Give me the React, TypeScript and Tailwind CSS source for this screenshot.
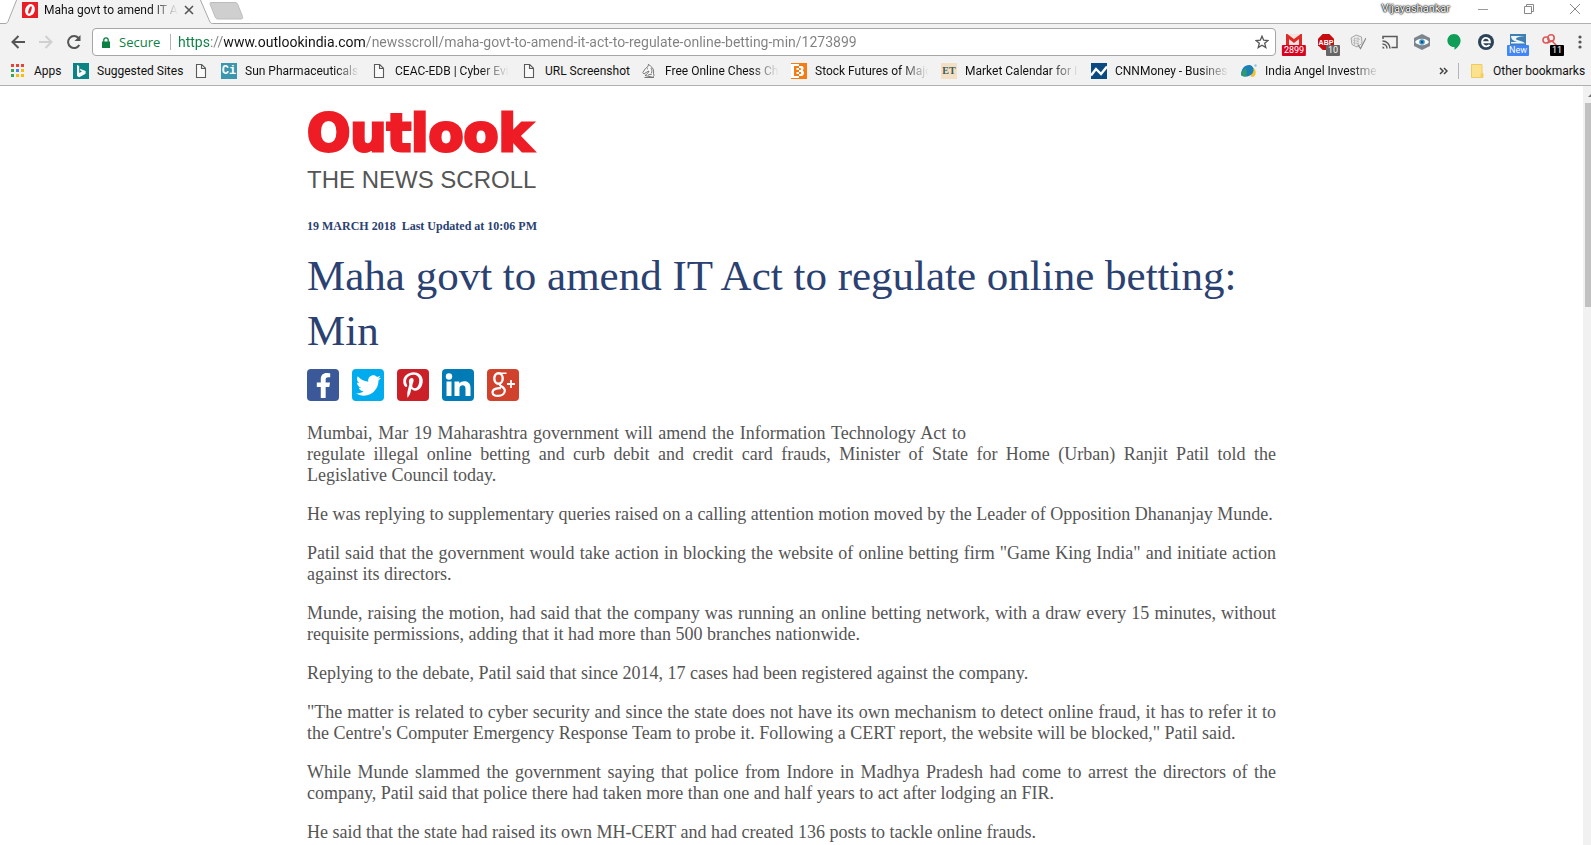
import type { ReactNode } from "react";
import { FaFacebookF, FaTwitter, FaPinterestP } from "react-icons/fa";

const paragraphs = [
  "He was replying to supplementary queries raised on a calling attention motion moved by the Leader of Opposition Dhananjay Munde.",
  'Patil said that the government would take action in blocking the website of online betting firm "Game King India" and initiate action against its directors.',
  "Munde, raising the motion, had said that the company was running an online betting network, with a draw every 15 minutes, without requisite permissions, adding that it had more than 500 branches nationwide.",
  "Replying to the debate, Patil said that since 2014, 17 cases had been registered against the company.",
  '"The matter is related to cyber security and since the state does not have its own mechanism to detect online fraud, it has to refer it to the Centre\'s Computer Emergency Response Team to probe it. Following a CERT report, the website will be blocked," Patil said.',
  "While Munde slammed the government saying that police from Indore in Madhya Pradesh had come to arrest the directors of the company, Patil said that police there had taken more than one and half years to act after lodging an FIR.",
  "He said that the state had raised its own MH-CERT and had created 136 posts to tackle online frauds.",
];

function Icon({ children, size = 16 }: { children: ReactNode; size?: number }) {
  return (
    <svg width={size} height={size} viewBox="0 0 16 16" className="shrink-0" aria-hidden="true">
      {children}
    </svg>
  );
}

const PageIcon = () => (
  <Icon>
    <path d="M3.5 1.5h5.2l3.8 3.8v9.2h-9z M8.5 1.5v4h4" fill="#fafafa" stroke="#5a5a5a" strokeWidth="1.1" />
  </Icon>
);

const AppsIcon = () => (
  <Icon>
    <g fill="#ea4335"><rect x="1" y="1" width="3" height="3" /><rect x="6" y="1" width="3" height="3" /><rect x="11" y="1" width="3" height="3" /></g>
    <rect x="1" y="6" width="3" height="3" fill="#34a853" />
    <rect x="6" y="6" width="3" height="3" fill="#4285f4" />
    <rect x="11" y="6" width="3" height="3" fill="#fbbc05" />
    <rect x="1" y="11" width="3" height="3" fill="#34a853" />
    <rect x="6" y="11" width="3" height="3" fill="#fbbc05" />
    <rect x="11" y="11" width="3" height="3" fill="#fbbc05" />
  </Icon>
);

const BingIcon = () => (
  <Icon>
    <rect width="16" height="16" fill="#0c8484" />
    <path d="M4 2l2.2.9v7.2L9 8.6 7.7 8 6.9 5.8 12.6 8v2.8L6.2 14.2 4 13z" fill="#fff" />
  </Icon>
);

const ChessIcon = () => (
  <Icon>
    <path d="M3.5 14.5h9.5M4 12.5c1.5-1 3.500-2.500 4-4.500L5 9.500 3 11 1.800 9.500 4.500 5.500 7 3.500 7.500 1.200 9.500 3.200c2.500 1.500 3.500 4 3 7l.5 2.500-1.500 1.500zM6 6l1-.5M10 5c1 1.500 1 3.500.5 5M7 12l4-1" fill="#f7f7f7" stroke="#6a6a6a" strokeWidth="0.9" />
  </Icon>
);

const BloggerIcon = () => (
  <Icon>
    <rect width="16" height="16" fill="#fff" />
    <rect width="16" height="1" fill="#f57c13" />
    <rect y="15" width="16" height="1" fill="#f57c13" />
    <rect x="8" width="8" height="16" fill="#f57c13" />
    <path d="M3 3h5v10H3z" fill="#f57c13" />
    <path d="M5.500 5H8v2H5.500zM5.500 9H8v2H5.500z" fill="#fff" />
    <path d="M8 3h2.500c2 0 3 2.500 1.200 4.600C14 9 13 13 10.500 13H8v-2h2V9H8V7h1.800V5H8z" fill="#fff" />
  </Icon>
);

const CnnIcon = () => (
  <Icon>
    <rect width="16" height="16" fill="#0b4a80" />
    <path d="M0 12.500L5 6l5 5 6-7.500" fill="none" stroke="#fff" strokeWidth="2.400" />
  </Icon>
);

const AngelIcon = () => (
  <Icon>
    <path d="M12 4.500c3 2 3.500 6 1.500 8.500-1 1.200-2.500 1-4 .5z" fill="#f2c230" />
    <path d="M0 12C0 6 3.500 2 8 2c3 0 5 2.500 4.500 5.500C12 11 9 13.500 5 13.500 3 13.500 1 13 0 12z" fill="#1b80b8" />
    <path d="M0 12C1 8 3 6 5 5.500c1 3 .8 6 0 8C3 13.500 1 13 0 12z" fill="#2f9a6c" />
    <circle cx="14.500" cy="2.500" r="1.200" fill="#8bc5e6" />
  </Icon>
);

const FolderIcon = () => (
  <Icon>
    <path d="M2.500 1.500h10.500v9h1v4h-11.500z" fill="#fde28d" stroke="#eecb62" />
    <path d="M11.500 10.500h2.500v4h-2.500z" fill="#f3cf5a" />
  </Icon>
);

const textBadge = "flex size-4 shrink-0 items-center justify-center font-bold";

const bookmarks: { label?: string; icon: ReactNode; width: string }[] = [
  { label: "Apps", icon: <AppsIcon />, width: "w-[27px]" },
  { label: "Suggested Sites", icon: <BingIcon />, width: "w-[84px]" },
  { icon: <PageIcon />, width: "" },
  { label: "Sun Pharmaceuticals", icon: <span className={`${textBadge} bg-[#3b96ae] font-["Liberation_Mono"] text-[12px] text-white`}>Ci</span>, width: "w-[114px] mask-r-from-80%" },
  { label: "CEAC-EDB | Cyber Evi", icon: <PageIcon />, width: "w-[114px] mask-r-from-75%" },
  { label: "URL Screenshot", icon: <PageIcon />, width: "w-[84px]" },
  { label: "Free Online Chess Ch", icon: <ChessIcon />, width: "w-[114px] mask-r-from-75%" },
  { label: "Stock Futures of Majo", icon: <BloggerIcon />, width: "w-[114px] mask-r-from-75%" },
  { label: "Market Calendar for I", icon: <span className={`${textBadge} bg-[#f3dfc3] font-["Liberation_Serif"] text-[10px] text-[#3a5a5a]`}>ET</span>, width: "w-[114px] mask-r-from-75%" },
  { label: "CNNMoney - Busines", icon: <CnnIcon />, width: "w-[114px] mask-r-from-75%" },
  { label: "India Angel Investme", icon: <AngelIcon />, width: "w-[114px] mask-r-from-75%" },
];

const extensions: { name: string; icon: ReactNode; badge?: string; badgeClass?: string }[] = [
  {
    name: "Mail",
    badge: "2899",
    badgeClass: "left-1/2 -translate-x-1/2 bg-[#d5041f]",
    icon: <><rect width="16" height="12" fill="#f3e4e2" /><path d="M1.500 14V2L8 7l6.500-5V14" fill="none" stroke="#dd2c28" strokeWidth="3" /></>,
  },
  {
    name: "Ad blocker",
    badge: "10",
    badgeClass: "right-0.5 w-3.5 bg-[#666]",
    icon: <><path d="M4.700 0h6.600L16 4.700v6.600L11.300 16H4.700L0 11.300V4.700z" fill="#c70d10" /><text x="8" y="10.500" textAnchor="middle" fontFamily="Liberation Sans" fontSize="7" fontWeight="700" fill="#fff">ABP</text></>,
  },
  {
    name: "Checker",
    icon: <><path d="M1 4l5-3 5.500 2 .5 6.500-5 3.500-5-2.500z" fill="#ececec" stroke="#a5a5a5" /><path d="M2.500 6l6 1.500M3 8.500l6 1.500M4 4l6 1.500M4.500 4v7M8 3v9" stroke="#b5b5b5" strokeWidth="0.800" /><path d="M8 11l2.500 3.500L16 4" fill="none" stroke="#8a8a8a" strokeWidth="1.200" /></>,
  },
  {
    name: "Cast",
    icon: <><path d="M1 5V2.500h14v11H9.500" fill="none" stroke="#5a5a5a" strokeWidth="1.500" /><path d="M.5 7a7.500 7.500 0 0 1 7.500 7.500M.5 10a4.500 4.500 0 0 1 4.500 4.500" fill="none" stroke="#5a5a5a" strokeWidth="1.500" /><path d="M.5 12.500a2 2 0 0 1 2 2h-2z" fill="#5a5a5a" /></>,
  },
  {
    name: "Privacy",
    icon: <><path d="M8 0l8 4v8l-8 4-8-4V4z" fill="#7d848b" /><path d="M1 8C4 3.800 12 3.800 15 8 12 12.200 4 12.200 1 8z" fill="#fff" /><circle cx="8" cy="8" r="2.800" fill="#3a96cc" /><circle cx="8" cy="8" r="1.200" fill="#1d4f77" /></>,
  },
  {
    name: "Hangouts",
    icon: <path d="M8 0c3.800 0 6.600 2.900 6.600 6.600 0 4-3 7.200-6.100 9.200v-2.700C4.500 13.300 1.400 10.300 1.400 6.600 1.400 2.900 4.200 0 8 0z" fill="#0f9d58" />,
  },
  {
    name: "Reader",
    icon: <><circle cx="8" cy="8" r="8" fill="#2c4257" /><path d="M4.300 8.300h7.600c.2-5.800-7.800-6-7.800-.2 0 5 5.500 5 7.600 2.800" fill="none" stroke="#fff" strokeWidth="1.900" /></>,
  },
  {
    name: "Capture",
    badge: "New",
    badgeClass: "left-1/2 -translate-x-1/2 bg-[#4285f4]",
    icon: <><rect width="16" height="16" fill="#3f7fb2" /><path d="M1 2h14C9 2.500 6 3.500 6 5c0 1.500 7 1.500 9 4.500H1V8h6C4 7 1 5.500 1 2z" fill="#eef5fa" /></>,
  },
  {
    name: "Links",
    badge: "11",
    badgeClass: "right-0.5 w-3.5 bg-black",
    icon: <g fill="none" stroke="#db5a5a" strokeWidth="1.600"><circle cx="4" cy="6" r="3" /><circle cx="9" cy="4" r="3.200" /><path d="M5 9l5-2 5 5" /></g>,
  },
];

const toolButton = "flex h-8 w-7 shrink-0 items-center justify-center";

function TitleBar() {
  return (
    <header className="flex h-6 shrink-0 items-stretch bg-white">
      <div className="relative w-[250px] shrink-0">
        <svg width="250" height="24" className="absolute inset-0" aria-hidden="true">
          <path d="M0 23.500H5c2 0 2.500-1 3-2L17 0H200l9 21c.6 1.500 1.200 2.500 3 2.500h38V24H0z" fill="#f2f2f2" />
          <path d="M0 23.500H5c2 0 2.500-1 3-2L17-1M200-1l9.500 22c.6 1.500 1.200 2.500 3 2.500H250" fill="none" stroke="#a8a8a8" />
          <path d="M211 2.500h24c1.500 0 2.200.6 2.800 2l4.700 12c.6 1.500 0 2.500-1.500 2.500h-23c-1.500 0-2.200-.6-2.800-2l-5-12.500c-.5-1.300-.2-2 .8-2z" fill="#cfcfcf" stroke="#bdbdbd" />
        </svg>
        <div className="relative flex h-5 items-center pl-[22px]">
          <Icon>
            <rect width="16" height="16" fill="#ea1c24" />
            <ellipse cx="8" cy="8" rx="4.800" ry="6" transform="rotate(18 8 8)" fill="#fff" />
            <ellipse cx="8" cy="8" rx="1.300" ry="4" transform="rotate(18 8 8)" fill="#ea1c24" />
          </Icon>
          <span className="ml-1.5 w-[134px] whitespace-nowrap mask-r-from-80%">Maha govt to amend IT A</span>
          <button aria-label="Close tab" className="ml-1.5">
            <svg width="10" height="10" viewBox="0 0 10 10"><path d="M1 1l8 8M9 1L1 9" stroke="#555" strokeWidth="1.600" /></svg>
          </button>
        </div>
      </div>
      <div className="flex-1 border-b border-[#b0b0b0]" />
      <div className="flex items-start border-b border-[#b0b0b0]">
        <span className="mr-2.5 text-[11px] leading-[18px] text-white [text-shadow:0_0_2px_#000,0_0_2px_#000,0_0_1px_#000]">Vijayashankar</span>
        <button aria-label="Minimize" className="flex h-[17px] w-[46px] items-center justify-center">
          <svg width="10" height="10"><path d="M0 5.500h10" stroke="#999" /></svg>
        </button>
        <button aria-label="Restore" className="flex h-[17px] w-[46px] items-center justify-center">
          <svg width="10" height="10"><path d="M.5 2.500h7v7h-7zM2.500 2.500v-2h7v7h-2" fill="none" stroke="#888" /></svg>
        </button>
        <button aria-label="Close" className="flex h-[17px] w-[39px] items-center justify-center pl-1.5">
          <svg width="10" height="10"><path d="M0 0l10 10M10 0L0 10" stroke="#888" /></svg>
        </button>
      </div>
    </header>
  );
}

function Toolbar() {
  return (
    <nav className="flex h-9 shrink-0 items-center pl-1">
      <button aria-label="Back" className={toolButton}>
        <svg width="14" height="14" viewBox="0 0 14 14"><path d="M14 7H1.500M7.500 1L1.500 7l6 6" fill="none" stroke="#555" strokeWidth="2" /></svg>
      </button>
      <button aria-label="Forward" className={toolButton}>
        <svg width="14" height="14" viewBox="0 0 14 14"><path d="M0 7h12.500M6.500 1l6 6-6 6" fill="none" stroke="#d0d0d0" strokeWidth="2" /></svg>
      </button>
      <button aria-label="Reload" className={toolButton}>
        <svg width="16" height="16" viewBox="0 0 16 16"><path d="M13.300 11A6 6 0 1 1 12.500 4" fill="none" stroke="#555" strokeWidth="2" /><path d="M14.500 1v6h-6z" fill="#555" /></svg>
      </button>
      <div className="ml-1 flex h-7 min-w-0 flex-1 items-center rounded-sm border border-[#a6a6a6] bg-white pr-1.5 pl-[9px]">
        <svg width="8" height="11" viewBox="0 0 8 11" aria-hidden="true"><path d="M0 4.500h8V11H0z" fill="#0b8043" /><path d="M1.800 5V3a2.200 2.200 0 0 1 4.400 0v2" fill="none" stroke="#0b8043" strokeWidth="1.300" /></svg>
        <span className="ml-[9px] w-[42px] font-['Open_Sans',sans-serif] text-[13px] text-[#0b8043]">Secure</span>
        <span className="ml-[9px] h-4 w-px bg-[#b5b5b5]" />
        <input
          aria-label="Address"
          defaultValue="https://www.outlookindia.com/newsscroll/maha-govt-to-amend-it-act-to-regulate-online-betting-min/1273899"
          className="ml-[7px] min-w-0 flex-1 bg-[linear-gradient(90deg,#0b8043_33px,#808080_33px,#808080_46px,#111_46px,#111_188px,#808080_188px)] bg-clip-text text-[14px] text-transparent outline-none"
        />
        <button aria-label="Bookmark this page">
          <svg width="14" height="14" viewBox="0 0 14 14"><path d="M7 1.200l1.700 4 4.300.3-3.300 2.800 1.100 4.200L7 10.200l-3.800 2.300 1.100-4.200L1 5.500l4.300-.3z" fill="none" stroke="#555" strokeWidth="1.300" /></svg>
        </button>
      </div>
      <div className="ml-0.5 flex">
        {extensions.map((e) => (
          <button key={e.name} aria-label={e.name} className="relative flex h-8 w-8 items-center justify-center">
            <Icon>{e.icon}</Icon>
            {e.badge && (
              <span className={`absolute bottom-0.5 h-[11px] rounded-[1px] px-0.5 text-center text-[9px] leading-[11px] text-white ${e.badgeClass}`}>
                {e.badge}
              </span>
            )}
          </button>
        ))}
      </div>
      <button aria-label="Menu" className="flex h-8 w-[25px] items-center pl-3">
        <svg width="4" height="14"><g fill="#555"><circle cx="2" cy="2" r="1.600" /><circle cx="2" cy="7" r="1.600" /><circle cx="2" cy="12" r="1.600" /></g></svg>
      </button>
    </nav>
  );
}

function BookmarksBar() {
  return (
    <nav aria-label="Bookmarks" className="flex h-[26px] shrink-0 items-center border-b border-[#b0b0b0] pb-[3px] pl-2.5">
      <div className="flex min-w-0 flex-1 gap-3 overflow-hidden">
        {bookmarks.map((b, i) => (
          <a key={i} href="#" aria-label={b.label ?? "Untitled"} className="flex shrink-0 items-center gap-2">
            {b.icon}
            {b.label && <span className={`whitespace-nowrap ${b.width}`}>{b.label}</span>}
          </a>
        ))}
      </div>
      <button aria-label="More bookmarks" className="mr-2.5">
        <svg width="9" height="8" viewBox="0 0 9 8"><path d="M1 1l3 3-3 3M5 1l3 3-3 3" fill="none" stroke="#444" strokeWidth="1.500" /></svg>
      </button>
      <span className="h-4 w-px bg-[#b5b5b5]" />
      <a href="#" className="ml-2.5 flex items-center gap-2 whitespace-nowrap">
        <FolderIcon />
        <span className="w-[98px]">Other bookmarks</span>
      </a>
    </nav>
  );
}

const socialLink = "flex size-8 items-center justify-center overflow-hidden rounded text-white";

function Article() {
  return (
    <main className="mx-auto w-full max-w-[969px] pt-5 font-['Liberation_Serif',serif] text-[#555]">
      <a href="#" className="block w-fit font-['DejaVu_Sans',sans-serif] text-[51px] leading-[56px] font-bold text-[#ee1c25] [-webkit-text-stroke:3px_#ee1c25]">Outlook</a>
      <p className="mt-0.5 font-['Liberation_Sans',sans-serif] text-2xl leading-8">THE NEWS SCROLL</p>
      <p className="mt-[22px] text-xs font-bold whitespace-pre text-[#2a4171]">19 MARCH 2018  Last Updated at 10:06 PM</p>
      <h1 className="mt-3.5 text-[43px] leading-[55px] text-[#2a4171]">Maha govt to amend IT Act to regulate online betting: Min</h1>
      <div className="mt-[11px] flex gap-[13px]">
        <a href="#" aria-label="Facebook" className={`${socialLink} bg-[#3b5998]`}><FaFacebookF size={25} /></a>
        <a href="#" aria-label="Twitter" className={`${socialLink} bg-[#00aced]`}><FaTwitter size={25} /></a>
        <a href="#" aria-label="Pinterest" className={`${socialLink} bg-[#cb2027]`}><FaPinterestP size={26} /></a>
        <a href="#" aria-label="LinkedIn" className={`${socialLink} bg-[#007bb6]`}>
          <svg width="32" height="32" viewBox="0 0 32 32" fill="#fff"><circle cx="7" cy="7.500" r="3.200" /><path d="M4.500 12.500h5V27h-5zM12.500 12.500h4.800v2c2.500-3.700 11.200-3.500 11.200 4V27h-5v-7.500c0-4.500-6-4-6 0V27h-5z" /></svg>
        </a>
        <a href="#" aria-label="Google Plus" className={`${socialLink} bg-[#d1422d]`}>
          <svg width="32" height="32" viewBox="0 0 32 32"><g fill="none" stroke="#fff"><ellipse cx="11.500" cy="9.500" rx="4.200" ry="5.200" strokeWidth="2.400" /><path d="M12 4.300h7.500" strokeWidth="1.500" /><path d="M13.500 14.500c-3 2.500 5 3.200 4.300 7.500-.5 6-12.300 6.500-12.300 1.500 0-3.800 5-4.500 8.500-4.300" strokeWidth="2.200" /><path d="M24 11v8M20 15h8" strokeWidth="1.800" /></g></svg>
        </a>
      </div>
      <div className="mt-[22px] space-y-[18px] text-justify text-[18px] leading-[21px]">
        <p>
          <span className="block w-full max-w-[659px] [text-align-last:justify]">
            Mumbai, Mar 19 Maharashtra government will amend the Information Technology Act to
          </span>
          regulate illegal online betting and curb debit and credit card frauds, Minister of State for Home (Urban) Ranjit Patil told the Legislative Council today.
        </p>
        {paragraphs.map((p) => (
          <p key={p}>{p}</p>
        ))}
      </div>
    </main>
  );
}

export default function App() {
  return (
    <div className="flex h-screen flex-col overflow-hidden bg-[#f2f2f2] font-[Roboto,sans-serif] text-[12px] leading-4 text-[#111]">
      <TitleBar />
      <Toolbar />
      <BookmarksBar />
      <div className="flex min-h-0 flex-1 overflow-hidden bg-white">
        <div className="min-w-0 flex-1 overflow-hidden">
          <Article />
        </div>
        <div className="flex w-2 flex-col overflow-hidden bg-[#f1f1f1] pl-0.5" aria-hidden="true">
          <svg width="6" height="17" className="shrink-0"><path d="M3 11l4-4v4z" fill="#777" /></svg>
          <div className="h-[204px] bg-[#c1c1c1]" />
        </div>
      </div>
    </div>
  );
}
